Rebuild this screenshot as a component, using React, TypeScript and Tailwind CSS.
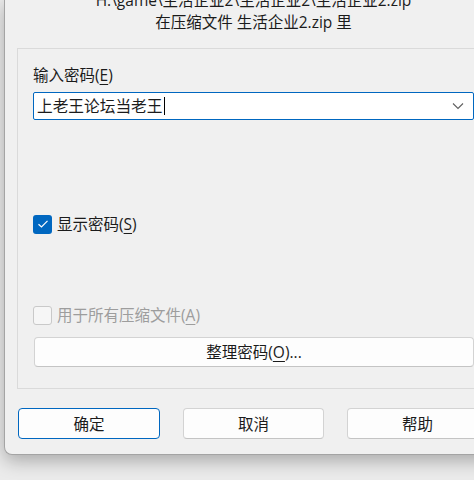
import React from "react";

const font = { fontFamily: '"Open Sans", "Noto Sans CJK SC", sans-serif' };

function U({ children }: { children: React.ReactNode }) {
  return <span className="underline underline-offset-[3px] decoration-[1px]">{children}</span>;
}

export default function App() {
  return (
    <div
      className="w-[474px] h-[480px] overflow-hidden bg-[#ebebeb] text-[#1b1b1b]"
      style={font}
    >
      <div className="ml-[4px] w-[498px] h-[456px] -mt-[1px] bg-[#f0f0f0] border-l border-b border-[#a4a4a4] rounded-bl-[8px] shadow-[0_6px_18px_rgba(0,0,0,0.28)] pl-[12px] pr-[12px] pt-[1px]">
        <div className="-mt-[11px] text-center text-[15.5px] leading-[22px] whitespace-nowrap">
          <div>H:\game\生活企业2\生活企业2\生活企业2.zip</div>
          <div>在压缩文件 生活企业2.zip 里</div>
        </div>

        <div className="mt-[15px] border border-[#dadada] pl-[15px] pr-[15px] pt-[16px] pb-[21px]">
          <div className="text-[15.5px] leading-[20px] h-[20px]">
            输入密码(<U>E</U>)
          </div>
          <div className="mt-[7px] h-[28px] bg-white border border-[#0067c0] rounded-[2px] flex items-center pl-[3px] pr-[8px]">
            <span className="text-[15.7px] leading-[20px]">上老王论坛当老王</span>
            <span className="w-[1px] h-[18px] bg-black ml-[1px]" />
            <span className="flex-1" />
            <svg width="12" height="8" viewBox="0 0 12 8" className="mr-[1px]">
              <path d="M1 1.5 L6 6.5 L11 1.5" fill="none" stroke="#5f5f5f" strokeWidth="1.1" />
            </svg>
          </div>

          <div className="mt-[94px] flex items-center h-[20px]">
            <div className="w-[19px] h-[19px] rounded-[3px] bg-[#0067c0] flex items-center justify-center">
              <svg width="12" height="10" viewBox="0 0 12 10">
                <path d="M1.5 5.2 L4.5 8 L10.5 1.8" fill="none" stroke="white" strokeWidth="1.2" />
              </svg>
            </div>
            <span className="ml-[5px] text-[15.5px] leading-[20px]">
              显示密码(<U>S</U>)
            </span>
          </div>

          <div className="mt-[71px] flex items-center h-[20px]">
            <div className="w-[19px] h-[19px] rounded-[3px] bg-[#f6f6f6] border border-[#c9c9c9]" />
            <span className="ml-[5px] text-[15.5px] leading-[20px] text-[#9d9d9d]">
              用于所有压缩文件(<U>A</U>)
            </span>
          </div>

          <div className="mt-[12px] ml-[1px] h-[30px] bg-[#fdfdfd] border border-[#d3d3d3] border-b-[#c4c4c4] rounded-[4px] flex items-center justify-center text-[15.5px] leading-[20px]">
            整理密码(<U>O</U>)...
          </div>
        </div>

        <div className="mt-[19px] flex gap-[23px] pl-[1px]">
          <div className="w-[142px] h-[31px] bg-[#fdfdfd] border border-[#0067c0] rounded-[4px] flex items-center justify-center text-[15.5px] leading-[20px]">
            确定
          </div>
          <div className="w-[141px] h-[31px] bg-[#fdfdfd] border border-[#d3d3d3] border-b-[#c4c4c4] rounded-[4px] flex items-center justify-center text-[15.5px] leading-[20px]">
            取消
          </div>
          <div className="w-[141px] h-[31px] bg-[#fdfdfd] border border-[#d3d3d3] border-b-[#c4c4c4] rounded-[4px] flex items-center justify-center text-[15.5px] leading-[20px]">
            帮助
          </div>
        </div>
      </div>
    </div>
  );
}
